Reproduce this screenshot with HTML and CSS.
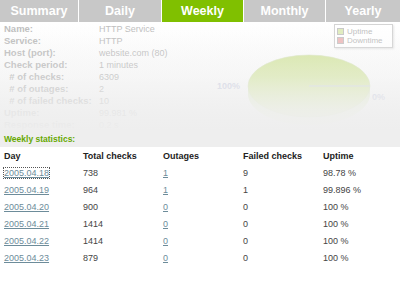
FILE: index.html
```html
<!DOCTYPE html>
<html lang="en">
<head>
    <meta charset="UTF-8">
    <title>Service statistics - Weekly</title>
    <link rel="stylesheet" href="styles.css">
</head>
<body>
    <div class="tabs">
        <a class="tab tab-summary" href="#">Summary</a>
        <a class="tab tab-daily" href="#">Daily</a>
        <a class="tab tab-weekly active" href="#">Weekly</a>
        <a class="tab tab-monthly" href="#">Monthly</a>
        <a class="tab tab-yearly" href="#">Yearly</a>
    </div>

    <div class="overview">
        <div class="info">
            <div class="row"><span class="label">Name:</span><span class="value">HTTP Service</span></div>
            <div class="row"><span class="label">Service:</span><span class="value">HTTP</span></div>
            <div class="row"><span class="label">Host (port):</span><span class="value">website.com (80)</span></div>
            <div class="row"><span class="label">Check period:</span><span class="value">1 minutes</span></div>
            <div class="row"><span class="label">&nbsp;&nbsp;# of checks:</span><span class="value">6309</span></div>
            <div class="row"><span class="label">&nbsp;&nbsp;# of outages:</span><span class="value">2</span></div>
            <div class="row"><span class="label">&nbsp;&nbsp;# of failed checks:</span><span class="value">10</span></div>
            <div class="row"><span class="label">Uptime:</span><span class="value">99.981 %</span></div>
            <div class="row"><span class="label">Response time:</span><span class="value">0.2 s</span></div>
        </div>

        <div class="chart">
            <div class="legend">
                <div class="legend-item"><span class="swatch up"></span>Uptime</div>
                <div class="legend-item"><span class="swatch down"></span>Downtime</div>
            </div>
            <svg class="pie" width="180" height="80" viewBox="0 0 180 80">
                <defs>
                    <linearGradient id="pieTop" x1="0" y1="0" x2="0" y2="1">
                        <stop offset="0" stop-color="#c2da78"/>
                        <stop offset="1" stop-color="#d8e7b2"/>
                    </linearGradient>
                    <linearGradient id="pieSide" x1="0" y1="0" x2="0" y2="1">
                        <stop offset="0" stop-color="#d2e2b4"/>
                        <stop offset="1" stop-color="#eaf1dc"/>
                    </linearGradient>
                </defs>
                <path d="M31 32 L31 40 A61 31 0 0 0 153 40 L153 32 Z" fill="url(#pieSide)"/>
                <ellipse cx="92" cy="32" rx="61" ry="31" fill="url(#pieTop)" stroke="#c9d9a6" stroke-width="0.6"/>
                <line x1="92" y1="32" x2="153" y2="32" stroke="#bfc6dc" stroke-width="1"/>
                <text x="0" y="35" class="pct">100%</text>
                <text x="155" y="46" class="pct">0%</text>
            </svg>
        </div>

        <div class="fade"></div>
    </div>

    <div class="section-title">Weekly statistics:</div>

    <table class="stats">
        <colgroup>
            <col class="c-day"><col class="c-total"><col class="c-out"><col class="c-fail"><col>
        </colgroup>
        <thead>
            <tr><th>Day</th><th>Total checks</th><th>Outages</th><th>Failed checks</th><th>Uptime</th></tr>
        </thead>
        <tbody>
            <tr><td><a href="#" class="focused">2005.04.18</a></td><td>738</td><td><a href="#">1</a></td><td>9</td><td>98.78 %</td></tr>
            <tr><td><a href="#">2005.04.19</a></td><td>964</td><td><a href="#">1</a></td><td>1</td><td>99.896 %</td></tr>
            <tr><td><a href="#">2005.04.20</a></td><td>900</td><td><a href="#">0</a></td><td>0</td><td>100 %</td></tr>
            <tr><td><a href="#">2005.04.21</a></td><td>1414</td><td><a href="#">0</a></td><td>0</td><td>100 %</td></tr>
            <tr><td><a href="#">2005.04.22</a></td><td>1414</td><td><a href="#">0</a></td><td>0</td><td>100 %</td></tr>
            <tr><td><a href="#">2005.04.23</a></td><td>879</td><td><a href="#">0</a></td><td>0</td><td>100 %</td></tr>
        </tbody>
    </table>
</body>
</html>
```

FILE: styles.css
```css
body {
    margin: 0;
    background-color: #fff;
    color: #333;
    font-family: "Liberation Sans", Arial, sans-serif;
    font-size: 9px;
}
.tabs {
    display: flex;
    gap: 1px;
    height: 22px;
    border-bottom: 1px solid #fff;
}
.tab {
    display: flex;
    align-items: center;
    justify-content: center;
    background-color: #c8c8c8;
    color: #fff;
    font-size: 12.5px;
    font-weight: bold;
    text-decoration: none;
}
.tab-summary { width: 78px; }
.tab-daily { width: 82px; }
.tab-weekly { width: 81px; }
.tab-monthly { width: 81px; }
.tab-yearly { flex: 1; }
.tab.active {
    background-color: #80c000;
}
.overview {
    position: relative;
    display: flex;
    height: 108px;
    overflow: hidden;
    background: linear-gradient(#ffffff, #eeeeee);
}
.info {
    width: 200px;
    padding-left: 4px;
}
.row {
    display: flex;
    height: 12px;
    line-height: 12px;
}
.label {
    width: 95px;
    color: #9a9a9a;
    font-size: 9.5px;
    font-weight: bold;
    white-space: nowrap;
}
.value {
    color: #9a9a9a;
    white-space: nowrap;
}
.chart {
    flex: 1;
    position: relative;
}
.legend {
    position: absolute;
    top: 1px;
    right: 7px;
    width: 55px;
    padding: 2px 0 2px 2px;
    border: 1px solid #bdbdbd;
    background-color: #fff;
    box-shadow: 1px 1px 2px rgba(0, 0, 0, 0.15);
}
.legend-item {
    display: flex;
    align-items: center;
    gap: 3px;
    height: 9px;
    color: #999;
    font-size: 8px;
}
.swatch {
    width: 5px;
    height: 5px;
    border: 1px solid #aaa;
}
.swatch.up { background-color: #cfe29a; }
.swatch.down { background-color: #e59a9a; }
.pie {
    position: absolute;
    left: 13px;
    top: 31px;
}
.pct {
    font-family: "Liberation Sans", Arial, sans-serif;
    font-size: 9px;
    font-weight: bold;
    fill: #b8bdd6;
}
.fade {
    position: absolute;
    inset: 0;
    background: linear-gradient(rgba(255, 255, 255, 0.35), rgba(246, 246, 246, 0.55) 50%, rgba(240, 240, 240, 0.88) 80%, rgba(238, 238, 238, 0.98));
}
.section-title {
    height: 16px;
    line-height: 16px;
    padding-left: 4px;
    background-color: #eeeeee;
    color: #66a800;
    font-size: 8.5px;
    font-weight: bold;
}
.stats {
    margin-left: 4px;
    border-collapse: collapse;
    table-layout: fixed;
    width: 390px;
}
.c-day { width: 79px; }
.c-total { width: 80px; }
.c-out { width: 80px; }
.c-fail { width: 80px; }
.stats th, .stats td {
    height: 17px;
    padding: 0;
    text-align: left;
    white-space: nowrap;
}
.stats th {
    color: #222;
    font-weight: bold;
}
.stats td {
    color: #444;
}
.stats a {
    color: #6d8c9a;
}
.stats a.focused {
    outline: 1px dotted #555;
}
```
